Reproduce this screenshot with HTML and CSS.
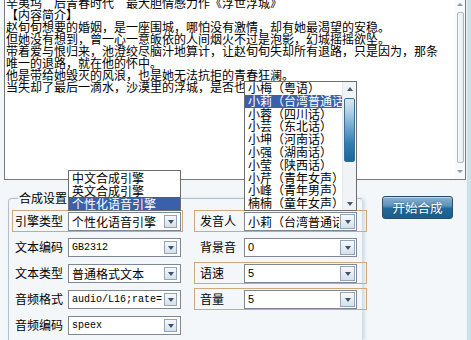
FILE: index.html
```html
<!DOCTYPE html>
<html lang="zh-CN">
<head>
<meta charset="utf-8">
<title>语音合成</title>
<link rel="stylesheet" href="styles.css">
</head>
<body>
<div class="app">
  <div class="main">
    <div class="editor">
<div class="editor-text">辛夷坞　后青春时代　最大胆情感力作《浮世浮城》
【内容简介】
赵旬旬想要的婚姻，是一座围城，哪怕没有激情，却有她最渴望的安稳。
但她没有想到，曾一心一意皈依的人间烟火不过是泡影，幻城摇摇欲坠。
带着爱与恨归来，池澄绞尽脑汁地算计，让赵旬旬失却所有退路，只是因为，那条
唯一的退路，就在他的怀中。
他是带给她毁灭的风浪，也是她无法抗拒的青春狂澜。
当失却了最后一滴水，沙漠里的浮城，是否也</div>
      <div class="vscroll">
        <div class="vs-up"><span class="tri-up"></span></div>
        <div class="vs-thumb"></div>
        <div class="vs-down"><span class="tri-down"></span></div>
      </div>
    </div>
    <div class="lower">
      <div class="group">
        <div class="group-title">合成设置</div>
        <div class="form">
          <div class="field left hl"><span class="lbl">引擎类型</span><div class="combo"><span class="val">个性化语音引擎</span><span class="drop"></span></div></div>
          <div class="field right hl"><span class="lbl">发音人</span><div class="combo"><span class="val">小莉（台湾普通话</span><span class="drop"></span></div></div>

          <div class="field left"><span class="lbl">文本编码</span><div class="combo"><span class="val mono">GB2312</span><span class="drop"></span></div></div>
          <div class="field right"><span class="lbl">背景音</span><div class="combo"><span class="val num">0</span><span class="drop"></span></div></div>

          <div class="field left"><span class="lbl">文本类型</span><div class="combo"><span class="val">普通格式文本</span><span class="drop"></span></div></div>
          <div class="field right hl"><span class="lbl">语速</span><div class="combo"><span class="val num">5</span><span class="drop"></span></div></div>

          <div class="field left"><span class="lbl">音频格式</span><div class="combo"><span class="val mono">audio/L16;rate=</span><span class="drop"></span></div></div>
          <div class="field right hl"><span class="lbl">音量</span><div class="combo"><span class="val num">5</span><span class="drop"></span></div></div>

          <div class="field left"><span class="lbl">音频编码</span><div class="combo"><span class="val mono">speex</span><span class="drop"></span></div></div>
          <div class="field right empty"></div>
        </div>
      </div>
      <button class="btn" type="button">开始合成</button>
    </div>
  </div>
  <div class="edge"></div>
</div>

<ul class="popup engine-list">
  <li>中文合成引擎</li>
  <li>英文合成引擎</li>
  <li class="sel">个性化语音引擎</li>
</ul>

<div class="popup speaker-list">
  <ul class="items">
    <li>小梅（粤语）</li>
    <li class="sel">小莉（台湾普通话</li>
    <li>小蓉（四川话）</li>
    <li>小芸（东北话）</li>
    <li>小坤（河南话）</li>
    <li>小强（湖南话）</li>
    <li>小莹（陕西话）</li>
    <li>小芹（青年女声）</li>
    <li>小峰（青年男声）</li>
    <li>楠楠（童年女声）</li>
  </ul>
  <div class="lscroll">
    <div class="ls-up"><span class="tri-up dark"></span></div>
    <div class="ls-thumb"></div>
    <div class="ls-track"></div>
    <div class="ls-down"><span class="tri-down dark"></span></div>
  </div>
</div>
</body>
</html>
```

FILE: styles.css
```css
html, body {
  margin: 0;
  padding: 0;
  width: 471px;
  height: 340px;
  overflow: hidden;
}

body {
  position: relative;
  background: #f3f7fa;
  font-family: "Noto Sans CJK SC", "Noto Sans", sans-serif;
  font-size: 12px;
  color: #000;
}

.app {
  display: flex;
  height: 340px;
}

.main {
  width: 466px;
  flex: none;
}

.edge {
  flex: 1;
  background: #c8e4e8;
  border-left: 1px solid #eef7f8;
}

/* text editor */
.editor {
  margin: -10px 0 0 4px;
  height: 188px;
  border: 1px solid #7b7b7b;
  background: #fff;
  display: flex;
}

.editor-text {
  flex: 1;
  padding: 6px 0 0 1px;
  line-height: 12px;
  white-space: pre;
  overflow: hidden;
}

.vscroll {
  width: 10px;
  flex: none;
  background: #f7f9fb;
  display: flex;
  flex-direction: column;
  align-items: center;
}

.vs-up {
  height: 20px;
  padding-top: 12px;
  box-sizing: border-box;
}

.vs-thumb {
  margin-top: 1px;
  width: 7px;
  height: 151px;
  box-sizing: border-box;
  border: 1px solid #a9b8c6;
  border-radius: 2px;
  background: linear-gradient(to right, #f5f8fb, #e6edf3);
}

.vs-down {
  padding-top: 7px;
}

.tri-up, .tri-down {
  display: block;
  width: 0;
  height: 0;
  border-left: 3px solid transparent;
  border-right: 3px solid transparent;
}

.tri-up { border-bottom: 3px solid #8a96a3; }
.tri-down { border-top: 3px solid #8a96a3; }
.tri-up.dark { border-bottom-color: #4a5c70; border-left-width: 3.5px; border-right-width: 3.5px; border-bottom-width: 4px; }
.tri-down.dark { border-top-color: #4a5c70; border-left-width: 3.5px; border-right-width: 3.5px; border-top-width: 4px; }

/* lower settings */
.lower {
  display: flex;
  align-items: flex-start;
}

.group {
  margin: 18px 0 0 8px;
  width: 355px;
  height: 142px;
  box-sizing: border-box;
  border: 1px solid #b3bfcb;
  border-right-color: #d3dde6;
  border-bottom: 0;
  border-radius: 4px 4px 0 0;
  padding: 0 0 0 3px;
  box-shadow: 2px 0 3px rgba(170, 195, 215, 0.45);
}

.group-title {
  margin: -9px 0 0 6px;
  padding: 0 1px;
  width: max-content;
  height: 16px;
  line-height: 16px;
  background: #f3f7fa;
}

.form {
  margin-top: 4px;
  display: grid;
  grid-template-columns: 171px 173px;
  grid-auto-rows: 22px;
  column-gap: 11px;
  row-gap: 4px;
}

.field {
  box-sizing: border-box;
  border: 1px solid transparent;
  display: flex;
  align-items: flex-start;
}

.field.hl {
  border-color: #cfa979;
}

.lbl {
  box-sizing: border-box;
  flex: none;
  line-height: 20px;
  white-space: nowrap;
}

.field.left .lbl {
  width: 55px;
  padding-left: 2px;
}

.field.right .lbl {
  width: 49px;
  padding-left: 5px;
}

.combo {
  margin-top: 1px;
  width: 113px;
  height: 19px;
  flex: none;
  box-sizing: border-box;
  border: 1px solid #7d8894;
  background: #fff;
  display: flex;
  align-items: center;
}

.val {
  flex: 1;
  min-width: 0;
  padding-left: 3px;
  line-height: 17px;
  white-space: nowrap;
  overflow: hidden;
}

.val.mono {
  font-family: "Liberation Mono", "DejaVu Sans Mono", monospace;
  font-size: 10px;
}

.val.num {
  font-family: "Liberation Sans", sans-serif;
  font-size: 11px;
}

.drop {
  flex: none;
  width: 13px;
  height: 13px;
  margin: 0 3px 0 1px;
  box-sizing: border-box;
  border: 1px solid #93a6b8;
  background: linear-gradient(#f6f9fb, #d6e0ea);
  display: flex;
  align-items: center;
  justify-content: center;
}

.drop::after {
  content: "";
  width: 0;
  height: 0;
  border-left: 3.5px solid transparent;
  border-right: 3.5px solid transparent;
  border-top: 4px solid #3e5168;
}

.field.right .drop {
  width: 15px;
  height: 15px;
  margin-right: 1px;
}

/* start button */
.btn {
  margin: 16px 0 0 19px;
  width: 71px;
  height: 23px;
  padding: 0;
  border: 1px solid #2a4d69;
  border-radius: 3px;
  background: linear-gradient(#8db3cf 0%, #5a91b8 42%, #21699a 55%, #175e8c 100%);
  box-shadow: inset 0 1px 0 rgba(255, 255, 255, 0.45);
  color: #fff;
  font-family: "Noto Sans CJK SC", sans-serif;
  font-size: 12.5px;
  line-height: 21px;
  text-shadow: 0 0 2px rgba(20, 60, 90, 0.6);
}

/* open drop-down lists */
.popup {
  position: absolute;
  box-sizing: border-box;
  border: 1px solid #6d6d6d;
  background: #fff;
  margin: 0;
  padding: 0;
  list-style: none;
}

.engine-list {
  left: 68px;
  top: 170px;
  width: 113px;
}

.engine-list li {
  height: 13px;
  line-height: 13px;
  padding-left: 3px;
  white-space: nowrap;
}

.sel {
  background: #3b60ab;
  color: #fff;
}

.speaker-list {
  left: 244px;
  top: 81px;
  width: 113px;
  height: 130px;
  display: flex;
}

.items {
  flex: 1;
  min-width: 0;
  margin: 0;
  padding: 0;
  list-style: none;
  overflow: hidden;
}

.items li {
  height: 12.8px;
  line-height: 12.8px;
  padding-left: 3px;
  white-space: nowrap;
  overflow: hidden;
}

.lscroll {
  width: 13px;
  flex: none;
  background: #f1f4f7;
  border-left: 1px solid #e3e8ee;
  display: flex;
  flex-direction: column;
  align-items: center;
}

.ls-up {
  height: 14px;
  display: flex;
  align-items: center;
}

.ls-thumb {
  margin-top: 2px;
  width: 11px;
  height: 64px;
  box-sizing: border-box;
  border: 1px solid #3d6f93;
  border-radius: 2px;
  background: linear-gradient(#dce8f2 0%, #b7d3e8 18%, #6fa8d2 45%, #2f7db3 72%, #1c6698 100%);
}

.ls-track {
  flex: 1;
}

.ls-down {
  height: 12px;
  display: flex;
  align-items: center;
}
```
